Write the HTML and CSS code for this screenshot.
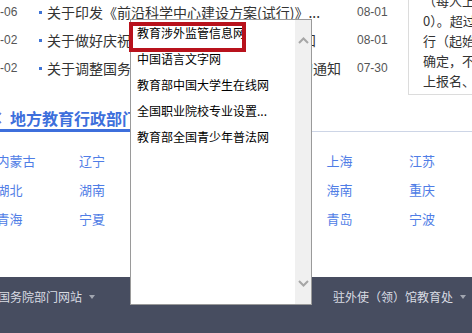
FILE: index.html
```html
<!DOCTYPE html>
<html lang="zh-CN">
<head>
    <meta charset="UTF-8">
    <meta name="viewport" content="width=device-width, initial-scale=1.0">
    <title>教育部 - 相关网站</title>
    <link rel="stylesheet" href="styles.css">
</head>
<body>
    <!-- Top: news list + notice -->
    <div class="top">
        <ul class="news">
            <li><span class="prev">-06</span><i class="dot"></i><a class="title" href="#">关于印发《前沿科学中心建设方案(试行)》...</a><span class="date">08-01</span></li>
            <li><span class="prev">-02</span><i class="dot"></i><a class="title" href="#">关于做好庆祝2020年教师节宣传活动的通知</a><span class="date">08-01</span></li>
            <li><span class="prev">-02</span><i class="dot"></i><a class="title" href="#">关于调整国务院教育督导委员会组成人员的通知</a><span class="date">07-30</span></li>
        </ul>
        <div class="notice">
            <p>（每人上限为30</p>
            <p>0）。超过部分不予受理</p>
            <p>行（起始时间以报名</p>
            <p>确定，不得提前）。线</p>
            <p>上报名、现场确认</p>
        </div>
    </div>

    <!-- Local education departments -->
    <div class="section-head">
        <h3>
            <svg class="head-icon" width="16" height="16" viewBox="0 0 16 16"><path d="M3 3 L13 13 M13 3 L3 13" stroke="#5b85e6" stroke-width="1.6" fill="none"/></svg>
            地方教育行政部门
        </h3>
    </div>
    <ul class="regions">
        <li>内蒙古</li><li>辽宁</li><li>吉林</li><li>黑龙江</li><li>上海</li><li>江苏</li>
        <li>湖北</li><li>湖南</li><li>广东</li><li>广西</li><li>海南</li><li>重庆</li>
        <li>青海</li><li>宁夏</li><li>新疆</li><li>兵团</li><li>青岛</li><li>宁波</li>
    </ul>

    <!-- Footer links -->
    <div class="footer">
        <div class="footer-item">国务院部门网站<i class="caret"></i></div>
        <div class="footer-item"></div>
        <div class="footer-item">驻外使（领）馆教育处<i class="caret"></i></div>
    </div>

    <!-- Opened select list -->
    <div class="dropdown">
        <ul>
            <li class="marked">教育涉外监管信息网<span class="mark"></span></li>
            <li>中国语言文字网</li>
            <li>教育部中国大学生在线网</li>
            <li>全国职业院校专业设置...</li>
            <li>教育部全国青少年普法网</li>
        </ul>
        <div class="scroll">
            <svg width="11" height="7" viewBox="0 0 11 7"><path d="M1 6 L5.5 1.5 L10 6" stroke="#a6a6a6" stroke-width="2" fill="none"/></svg>
            <svg width="11" height="7" viewBox="0 0 11 7"><path d="M1 1 L5.5 5.5 L10 1" stroke="#a6a6a6" stroke-width="2" fill="none"/></svg>
        </div>
    </div>
</body>
</html>
```

FILE: styles.css
```css
/* General */
body {
    margin: 0;
    width: 472px;
    height: 333px;
    overflow: hidden;
    position: relative;
    background: #fff;
    font-family: "Noto Sans CJK SC", "Noto Sans", sans-serif;
    color: #333;
}

ul {
    list-style: none;
    margin: 0;
    padding: 0;
}

a {
    color: inherit;
    text-decoration: none;
}

/* Top area */
.top {
    display: flex;
    align-items: flex-start;
}

.news {
    width: 408px;
    flex-shrink: 0;
    margin-top: -2px;
}

.news li {
    display: flex;
    align-items: center;
    height: 28px;
    font-size: 14px;
}

.prev,
.date {
    font-family: "Liberation Sans", Arial, sans-serif;
    font-size: 12px;
    color: #555;
}

.prev {
    width: 39px;
}

.dot {
    width: 3px;
    height: 3px;
    margin-right: 5px;
    background: #3f74d6;
}

.title {
    width: 310px;
    white-space: nowrap;
    overflow: hidden;
}

.notice {
    flex: 1;
    margin-top: -9px;
    padding: 0 0 3px 14px;
    border-left: 1px solid #dcdcdc;
    border-bottom: 1px solid #dcdcdc;
    font-size: 13px;
    line-height: 20px;
    white-space: nowrap;
    overflow: hidden;
}

.notice p {
    margin: 0;
}

/* Section heading */
.section-head {
    display: flex;
    height: 24px;
    margin-top: 12px;
    border-bottom: 1px solid #cdd5e6;
}

.section-head h3 {
    display: flex;
    align-items: center;
    gap: 6px;
    height: 22px;
    margin: 0;
    font-size: 16px;
    line-height: 22px;
    font-weight: bold;
    color: #3d6fdc;
    border-bottom: 3px solid #3d6fdc;
}

.head-icon {
    margin-left: -12px;
}

/* Regions grid */
.regions {
    display: grid;
    grid-template-columns: repeat(6, 82.5px);
    margin: 14px 0 0 -3.5px;
    font-size: 13px;
    line-height: 29px;
    color: #4f7de6;
}

/* Footer */
.footer {
    display: flex;
    align-items: flex-start;
    height: 60px;
    margin: 44px 0 0 -2px;
    padding-top: 11px;
    box-sizing: border-box;
    background: #474d60;
    font-size: 12px;
    line-height: 18px;
    color: #d9dce3;
}

.footer-item {
    display: flex;
    align-items: center;
    gap: 7px;
    width: 167.5px;
    height: 18px;
    flex-shrink: 0;
}

.caret {
    width: 0;
    height: 0;
    border-top: 4px solid #a2a6b0;
    border-left: 3.5px solid transparent;
    border-right: 3.5px solid transparent;
}

/* Dropdown list */
.dropdown {
    position: absolute;
    left: 130px;
    top: 19px;
    width: 180px;
    height: 284px;
    display: flex;
    background: #fff;
    border: 1px solid #9a9a9a;
}

.dropdown ul {
    flex: 1;
    font-size: 12px;
    color: #000;
}

.dropdown li {
    height: 26px;
    line-height: 26px;
    padding-left: 6px;
    white-space: nowrap;
}

.dropdown li.marked {
    position: relative;
}

.mark {
    position: absolute;
    left: -2px;
    top: 2px;
    width: 109px;
    height: 22px;
    border: 4px solid #b8121c;
}

.scroll {
    width: 16px;
    padding: 17px 0;
    display: flex;
    flex-direction: column;
    justify-content: space-between;
    align-items: center;
    background: #f0f0f0;
}
```
